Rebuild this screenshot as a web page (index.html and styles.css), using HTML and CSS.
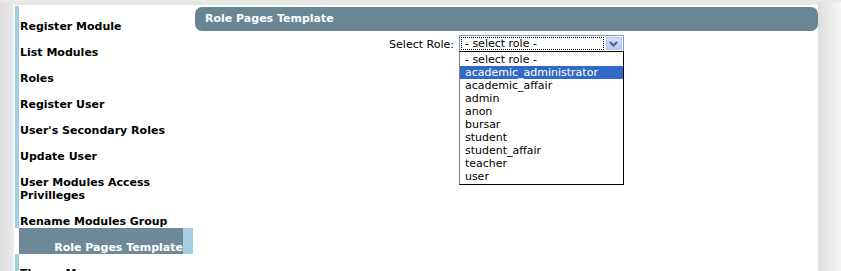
FILE: index.html
```html
<!DOCTYPE html>
<html lang="en">
<head>
    <meta charset="UTF-8">
    <title>Role Pages Template</title>
    <link rel="stylesheet" href="styles.css">
</head>
<body>
    <div class="page">
        <div class="menu">
            <a href="#">Register Module</a>
            <a href="#">List Modules</a>
            <a href="#">Roles</a>
            <a href="#">Register User</a>
            <a href="#">User's Secondary Roles</a>
            <a href="#">Update User</a>
            <a href="#">User Modules Access Privilleges</a>
            <a href="#">Rename Modules Group</a>
            <a href="#" class="active">Role Pages Template</a>
            <a href="#">Theme Manager</a>
        </div>
        <div class="main">
            <div class="title">Role Pages Template</div>
            <div class="role-row">
                <span class="label">Select Role:</span>
                <div class="select">
                    <span class="current">- select role -</span>
                    <span class="arrow">
                        <svg width="9" height="6" viewBox="0 0 9 6"><path d="M1 1 L4.5 4.5 L8 1" fill="none" stroke="#4d6185" stroke-width="2"/></svg>
                    </span>
                    <ul class="options">
                        <li>- select role -</li>
                        <li class="hover">academic_administrator</li>
                        <li>academic_affair</li>
                        <li>admin</li>
                        <li>anon</li>
                        <li>bursar</li>
                        <li>student</li>
                        <li>student_affair</li>
                        <li>teacher</li>
                        <li>user</li>
                    </ul>
                </div>
            </div>
        </div>
    </div>
</body>
</html>
```

FILE: styles.css
```css
body, html {
    margin: 0;
    padding: 0;
    font-family: "DejaVu Sans", Verdana, sans-serif;
    font-size: 11px;
    color: #000000;
}
body {
    height: 271px;
    overflow: hidden;
    padding-top: 2px;
    box-sizing: border-box;
    background: linear-gradient(to right, #dedede 0, #e8e8e8 12px, #f2f2f2 14px, #f2f2f2 818px, #dfdfdf 818px, #f6f6f6 100%);
    border-top: 2px solid #e9e9e9;
}
.page {
    margin: -2px 23px 0 14px;
    background: #ffffff;
    border-top: 3px solid #e6e9df;
    padding: 1px 0 0 1px;
    display: flex;
    gap: 2px;
    height: 271px;
}
.menu {
    width: 174px;
    padding-top: 1px;
    border-left: 4px solid #a5cde4;
    display: flex;
    flex-direction: column;
}
.menu a {
    display: block;
    padding: 13px 0 0 1px;
    line-height: 13px;
    font-weight: bold;
    color: #000000;
    text-decoration: none;
}
.menu a.active {
    margin-left: -4px;
    border-left: 4px solid #ffffff;
    border-right: 10px solid #a5cde4;
    background: #6e8a98;
    color: #ffffff;
    text-align: right;
}
.main {
    flex: 1;
    padding-top: 1px;
}
.title {
    height: 24px;
    line-height: 24px;
    background: #6a8593;
    border-radius: 7px;
    color: #ffffff;
    font-weight: bold;
    padding-left: 10px;
}
.role-row {
    display: flex;
    justify-content: center;
    align-items: center;
    gap: 5px;
    margin-top: 4px;
}
.label {
    padding-top: 1px;
}
.select {
    position: relative;
    width: 162px;
    height: 15px;
    border: 1px solid #7f9db9;
    display: flex;
    align-items: center;
    padding-left: 1px;
}
.current {
    flex: 1;
    height: 11px;
    line-height: 11px;
    border: 1px dotted #000000;
    padding-left: 3px;
}
.arrow {
    width: 16px;
    height: 13px;
    margin: 0 1px 0 2px;
    background: linear-gradient(#d4e1fc, #b6cbf8);
    border: 1px solid #b3c6ef;
    box-sizing: border-box;
    display: flex;
    align-items: center;
    justify-content: center;
}
.options {
    position: absolute;
    top: 15px;
    left: -1px;
    width: 163px;
    margin: 0;
    padding: 1px 0 1px 0;
    list-style: none;
    background: #ffffff;
    border: 1px solid #000000;
    border-left-color: #808080;
}
.options li {
    height: 13px;
    line-height: 13px;
    padding-left: 5px;
}
.options li.hover {
    background: #316ac5;
    color: #ffffff;
}
```
